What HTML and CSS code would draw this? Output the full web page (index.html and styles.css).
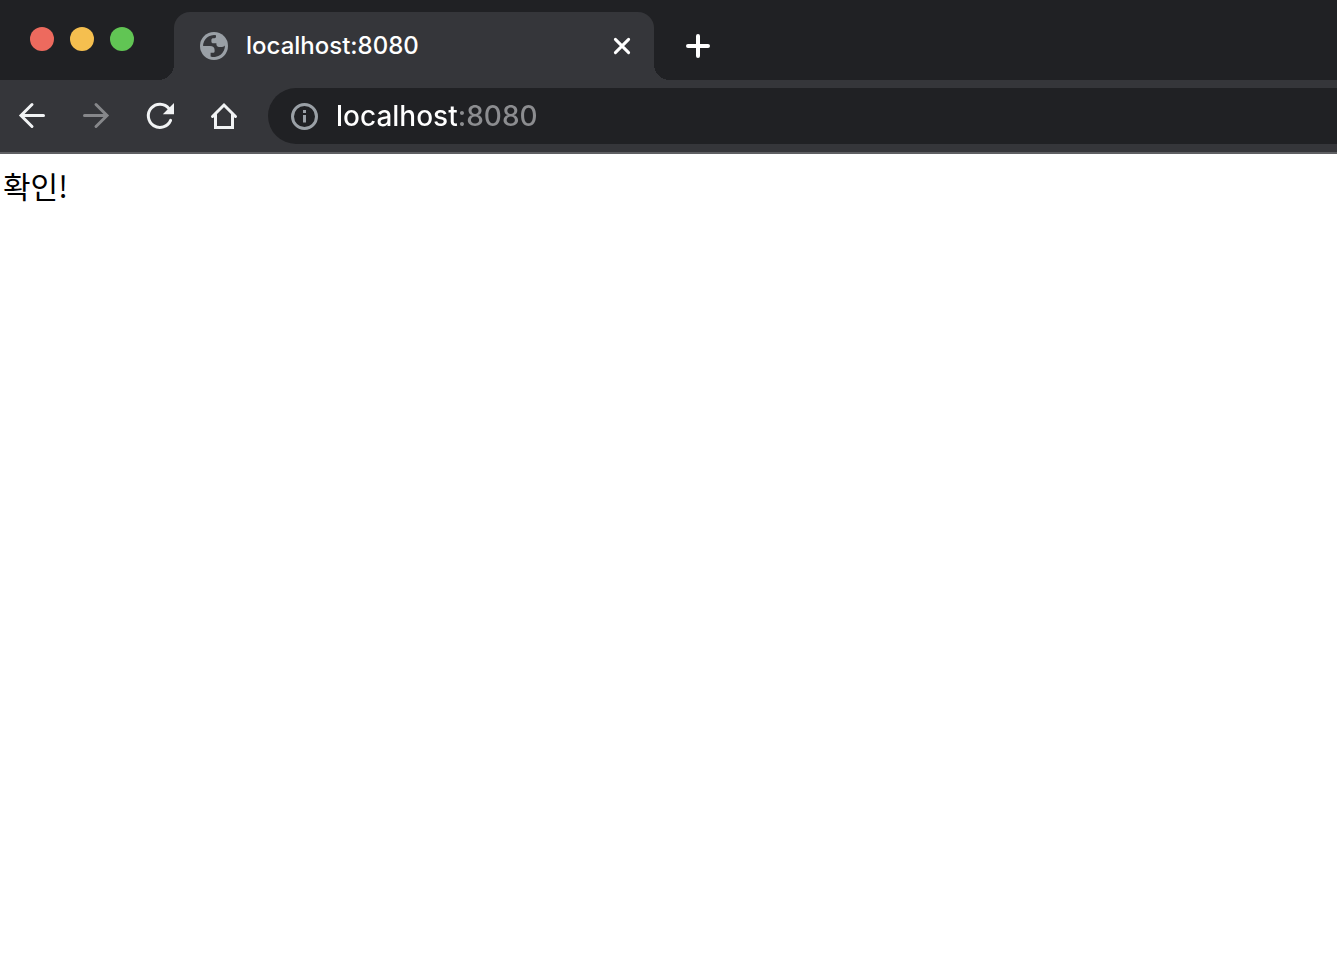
FILE: index.html
```html
<!DOCTYPE html>
<html lang="ko">
<head>
<meta charset="utf-8">
<meta name="viewport" content="width=device-width, initial-scale=1">
<title>localhost:8080</title>
<link rel="stylesheet" href="styles.css">
</head>
<body>
<header class="browser">
  <div class="tabstrip">
    <div class="window-controls">
      <button class="light light-close" aria-label="Close window"></button>
      <button class="light light-minimize" aria-label="Minimize window"></button>
      <button class="light light-zoom" aria-label="Zoom window"></button>
    </div>
    <div class="tab">
      <svg class="favicon" viewBox="0 0 28 28" aria-hidden="true">
        <circle cx="14" cy="14" r="14" fill="#9aa0a6"/>
        <path fill="#35363a" d="M16 3.2A11 11 0 0 0 3.1 14H10C13 14 14.6 15.4 14.6 18V19.2C14.6 20.2 14 20.8 13 20.8H10.6V24.4A11 11 0 0 0 24.9 13.4C24 14.8 22.5 15 20.5 15C18 15 16.4 14 16.4 12.4V11.2H13.4C12 11.2 11.4 10.4 11.4 9.4V8C11.4 6.8 12.2 6.3 13.4 6.3H14.4C15.6 6.3 16 5.5 16 4.6Z"/>
      </svg>
      <span class="tab-title">localhost:8080</span>
      <button class="icon-button tab-close" aria-label="Close tab">
        <svg class="close-icon" viewBox="0 0 20 20"><path d="M3.4 3.4 16.6 16.6M16.6 3.4 3.4 16.6"/></svg>
      </button>
    </div>
    <button class="icon-button new-tab" aria-label="New tab">
      <svg class="plus-icon" viewBox="0 0 24 24"><path d="M12 2V22M2 12H22"/></svg>
    </button>
  </div>
  <nav class="toolbar" aria-label="Navigation">
    <button class="icon-button" aria-label="Back">
      <svg class="nav-icon" viewBox="0 0 32 32"><path d="M27.5 15.5H6M16 4.5 5 15.5 16 26.5"/></svg>
    </button>
    <button class="icon-button" aria-label="Forward" disabled>
      <svg class="nav-icon" viewBox="0 0 32 32"><path d="M4.5 15.5H26M16 4.5 27 15.5 16 26.5"/></svg>
    </button>
    <button class="icon-button" aria-label="Reload">
      <svg class="nav-icon" viewBox="0 0 32 32"><path d="M25 8.6A11.6 11.6 0 1 0 26.6 20.4"/><path class="solid" d="M30 3V14.2H18.8Z"/></svg>
    </button>
    <button class="icon-button" aria-label="Home">
      <svg class="nav-icon" viewBox="0 0 32 32"><path d="M4.5 16.5 16 5 27.5 16.5M7.5 14.5V27.5H24.5V14.5"/></svg>
    </button>
    <div class="omnibox">
      <button class="icon-button site-info" aria-label="View site information">
        <svg class="info-icon" viewBox="0 0 28 28"><circle cx="14.5" cy="14.5" r="12"/><path d="M14.5 13V20.5M14.5 8V11"/></svg>
      </button>
      <input class="address" type="text" value="localhost:8080" aria-label="Address" spellcheck="false">
    </div>
  </nav>
</header>
<main class="page">확인!</main>
</body>
</html>
```
FILE: styles.css
```css
* {
  box-sizing: border-box;
}

body {
  margin: 0;
  background: #fff;
  font-family: Inter, "Noto Sans CJK KR", sans-serif;
}

button {
  padding: 0;
  border: 0;
  background: none;
}

svg {
  display: block;
}

.browser {
  overflow: hidden;
  border-bottom: 2px solid #5f6063;
  background: #35363a;
}

.tabstrip {
  display: flex;
  height: 80px;
  padding-top: 12px;
  background: #202124;
}

.window-controls {
  display: flex;
  flex: none;
  gap: 16px;
  width: 174px;
  padding: 15px 0 0 30px;
}

.light {
  width: 24px;
  height: 24px;
  border-radius: 50%;
}

.light-close {
  background: #ed6a5e;
}

.light-minimize {
  background: #f5bf4f;
}

.light-zoom {
  background: #61c554;
}

.tab {
  position: relative;
  display: flex;
  flex: 0 1 480px;
  align-items: center;
  padding: 0 18px 0 26px;
  border-radius: 16px 16px 0 0;
  background: #35363a;
}

.tab::before,
.tab::after {
  position: absolute;
  bottom: 0;
  width: 16px;
  height: 16px;
  content: "";
}

.tab::before {
  right: 100%;
  background: radial-gradient(circle at 0 0, transparent 16px, #35363a 16px);
}

.tab::after {
  left: 100%;
  background: radial-gradient(circle at 100% 0, transparent 16px, #35363a 16px);
}

.favicon {
  flex: none;
  width: 28px;
  height: 28px;
}

.tab-title {
  flex: 1;
  margin-left: 18px;
  color: #fff;
  font-size: 24px;
  font-weight: 450;
  line-height: 32px;
}

.icon-button {
  display: flex;
  flex: none;
  align-items: center;
  justify-content: center;
  width: 32px;
  height: 32px;
  color: #f1f3f4;
}

.icon-button:disabled {
  color: #86878a;
}

.icon-button path,
.icon-button circle {
  fill: none;
  stroke: currentColor;
  stroke-width: 3;
}

.tab-close,
.new-tab {
  color: #fff;
}

.tab-close {
  width: 28px;
}

.close-icon {
  width: 20px;
  height: 20px;
}

.close-icon path,
.plus-icon path {
  stroke-linecap: round;
}

.new-tab {
  align-self: center;
  margin-left: 28px;
}

.plus-icon {
  width: 24px;
  height: 24px;
}

.new-tab .plus-icon path {
  stroke-width: 4;
}

.toolbar {
  display: flex;
  gap: 32px;
  align-items: center;
  height: 72px;
  padding-left: 16px;
}

.nav-icon {
  width: 32px;
  height: 32px;
}

.nav-icon path {
  stroke-linecap: round;
}

.icon-button .solid {
  fill: currentColor;
  stroke: none;
}

.omnibox {
  display: flex;
  flex: 1;
  align-items: center;
  height: 56px;
  margin-left: -4px;
  padding-left: 20px;
  border-radius: 28px 0 0 28px;
  background: #202124;
}

.site-info {
  color: #9aa0a6;
}

.info-icon {
  width: 28px;
  height: 28px;
}

.address {
  flex: 1;
  min-width: 0;
  height: 40px;
  margin-left: 16px;
  padding: 0;
  border: 0;
  outline: 0;
  background: linear-gradient(to right, #fff 121px, #8c8d90 121px);
  -webkit-background-clip: text;
  background-clip: text;
  color: #fff;
  -webkit-text-fill-color: transparent;
  font: 450 28px/40px Inter, sans-serif;
}

.page {
  padding: 12px 3px;
  color: #000;
  font-family: "Noto Sans CJK KR", sans-serif;
  font-size: 30px;
  line-height: 38px;
}
```
